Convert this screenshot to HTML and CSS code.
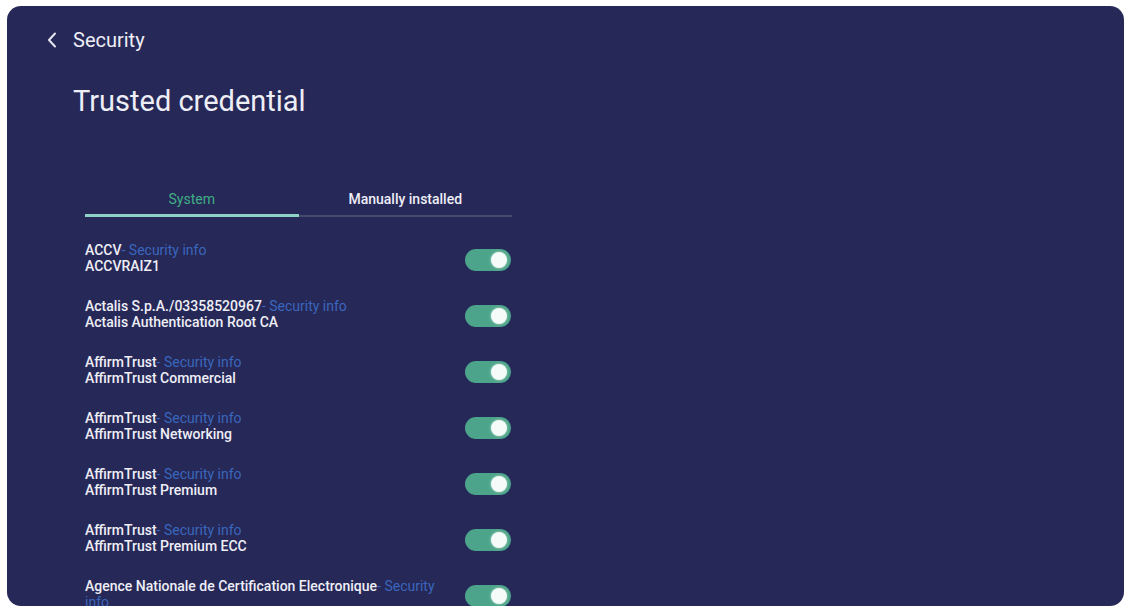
FILE: index.html
```html
<!DOCTYPE html>
<html lang="en">
<head>
    <meta charset="UTF-8">
    <title>Trusted credential</title>
    <link rel="stylesheet" href="styles.css">
</head>
<body>
    <div class="panel">
        <div class="topbar">
            <svg class="back" width="10" height="16" viewBox="0 0 10 16">
                <path d="M8 1.5 L2 8 L8 14.5" fill="none" stroke="#e6e6f2" stroke-width="2" stroke-linecap="round" stroke-linejoin="round"/>
            </svg>
            <span class="topbar-title">Security</span>
        </div>

        <h1 class="page-title">Trusted credential</h1>

        <div class="content">
            <div class="tabs">
                <div class="tab active">System</div>
                <div class="tab">Manually installed</div>
            </div>

            <ul class="cert-list">
                <li class="cert">
                    <div class="cert-text">
                        <div class="cert-org">ACCV<span class="info">- Security info</span></div>
                        <div class="cert-name">ACCVRAIZ1</div>
                    </div>
                    <span class="switch on"></span>
                </li>
                <li class="cert">
                    <div class="cert-text">
                        <div class="cert-org">Actalis S.p.A./03358520967<span class="info">- Security info</span></div>
                        <div class="cert-name">Actalis Authentication Root CA</div>
                    </div>
                    <span class="switch on"></span>
                </li>
                <li class="cert">
                    <div class="cert-text">
                        <div class="cert-org">AffirmTrust<span class="info">- Security info</span></div>
                        <div class="cert-name">AffirmTrust Commercial</div>
                    </div>
                    <span class="switch on"></span>
                </li>
                <li class="cert">
                    <div class="cert-text">
                        <div class="cert-org">AffirmTrust<span class="info">- Security info</span></div>
                        <div class="cert-name">AffirmTrust Networking</div>
                    </div>
                    <span class="switch on"></span>
                </li>
                <li class="cert">
                    <div class="cert-text">
                        <div class="cert-org">AffirmTrust<span class="info">- Security info</span></div>
                        <div class="cert-name">AffirmTrust Premium</div>
                    </div>
                    <span class="switch on"></span>
                </li>
                <li class="cert">
                    <div class="cert-text">
                        <div class="cert-org">AffirmTrust<span class="info">- Security info</span></div>
                        <div class="cert-name">AffirmTrust Premium ECC</div>
                    </div>
                    <span class="switch on"></span>
                </li>
                <li class="cert">
                    <div class="cert-text">
                        <div class="cert-org">Agence Nationale de Certification Electronique<span class="info">- Security info</span></div>
                    </div>
                    <span class="switch on"></span>
                </li>
            </ul>
        </div>
    </div>
</body>
</html>
```

FILE: styles.css
```css
/* Page */
body {
    margin: 0;
    background-color: #fff;
    font-family: Roboto, 'Liberation Sans', sans-serif;
    color: #eeeef6;
}

.panel {
    box-sizing: border-box;
    margin: 6px 2px 0 7px;
    height: 600px;
    background-color: #262857;
    border-radius: 14px;
    overflow: hidden;
}

/* Header */
.topbar {
    display: flex;
    align-items: center;
    gap: 16px;
    padding: 22px 0 0 40px;
    height: 24px;
}

.back {
    display: block;
}

.topbar-title {
    font-size: 20px;
    line-height: 24px;
}

.page-title {
    margin: 31px 0 0 66px;
    font-size: 29px;
    font-weight: 400;
    line-height: 36px;
}

/* Tabs */
.content {
    width: 427px;
    margin: 61px 0 0 78px;
}

.tabs {
    display: flex;
    border-bottom: 2px solid #46496c;
}

.tab {
    flex: 1;
    text-align: center;
    font-size: 14px;
    font-weight: 500;
    line-height: 16px;
    padding: 11px 0 7px;
    margin-bottom: -2px;
    border-bottom: 3px solid transparent;
}

.tab.active {
    color: #3fae85;
    font-weight: 400;
    border-bottom-color: #8fd1c4;
}

/* Certificate rows */
.cert-list {
    list-style: none;
    margin: 0;
    padding: 13px 0 0;
}

.cert {
    display: flex;
    align-items: center;
    justify-content: space-between;
    height: 56px;
}

.cert-text {
    max-width: 365px;
    font-size: 14px;
    font-weight: 500;
    line-height: 16px;
}

.info {
    color: #3a66bd;
    font-weight: 400;
}

/* Toggle switch */
.switch {
    position: relative;
    flex: none;
    width: 46px;
    height: 22px;
    margin: 4px 1px 0 0;
    border-radius: 11px;
    background-color: #4ca58a;
}

.switch::after {
    content: '';
    position: absolute;
    top: 3px;
    right: 4px;
    width: 16px;
    height: 16px;
    border-radius: 50%;
    background-color: #f4fbf8;
    box-shadow: 0 0 3px rgba(255, 255, 255, 0.6);
}
```
